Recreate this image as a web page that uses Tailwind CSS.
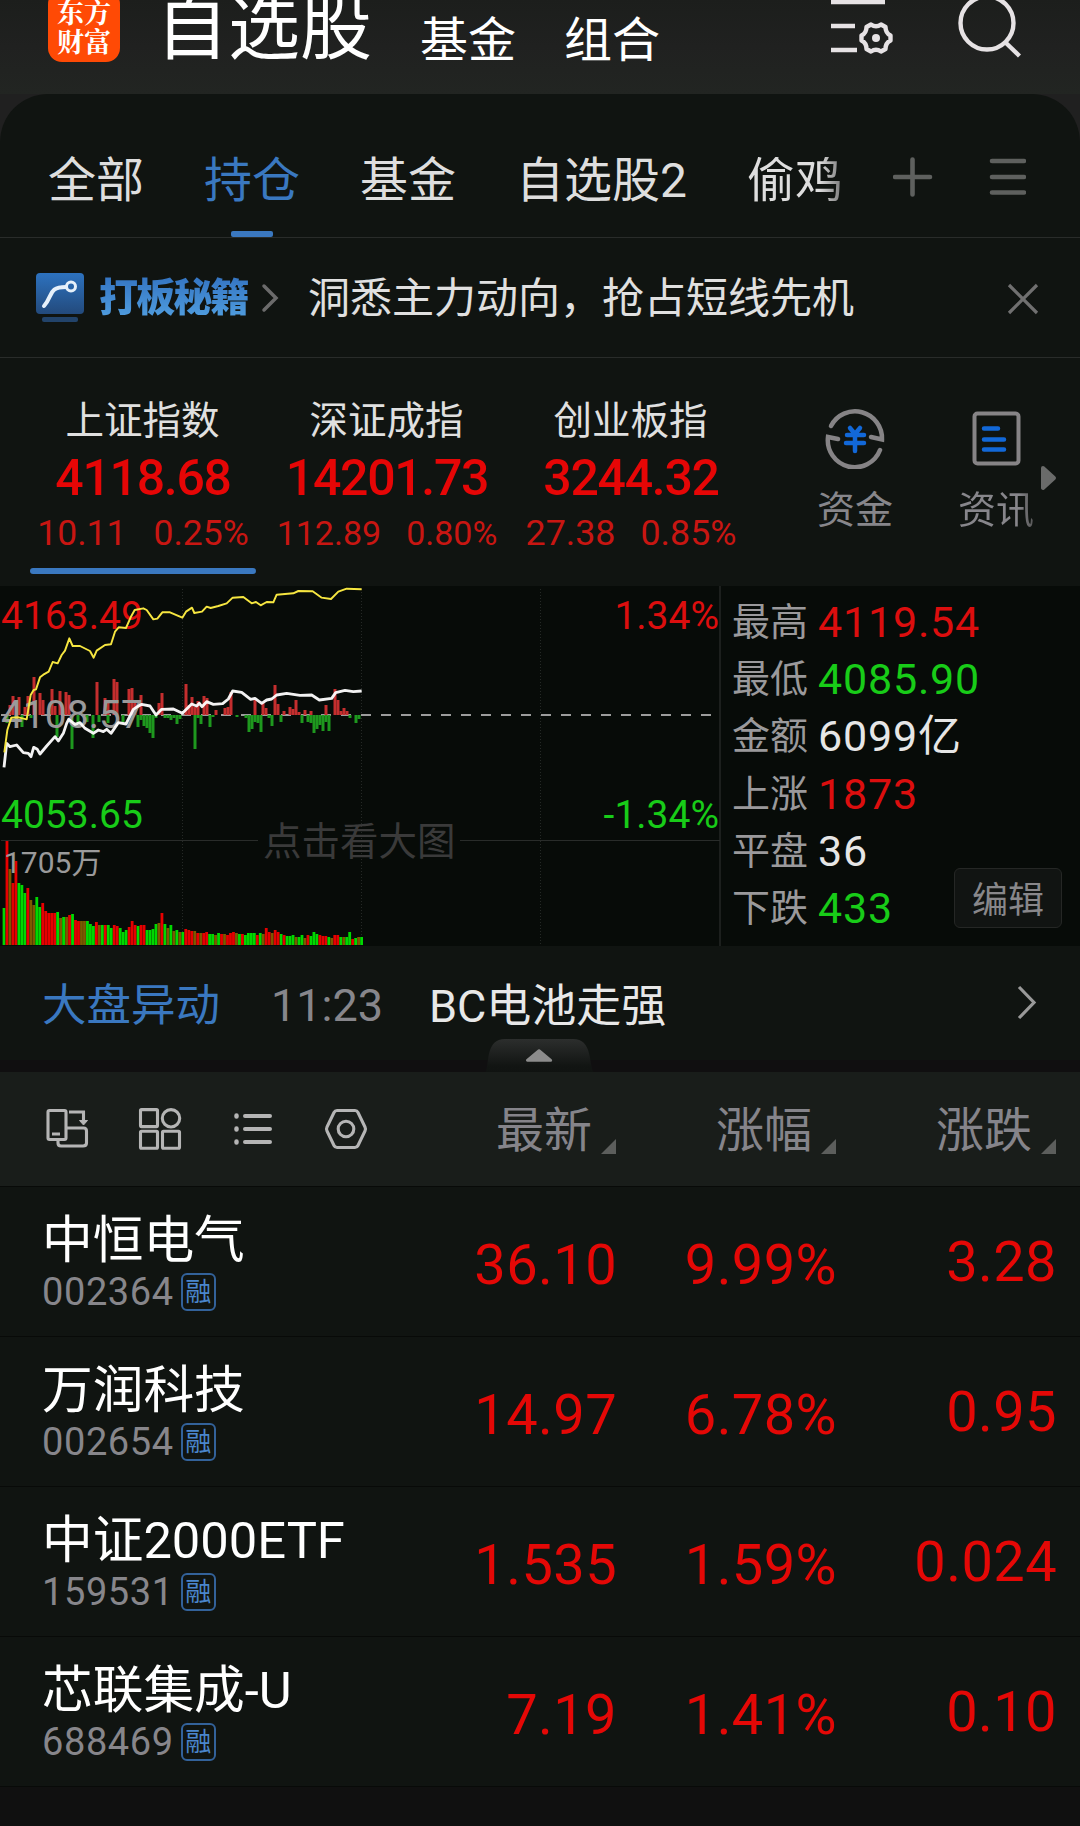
<!DOCTYPE html>
<html lang="zh-CN">
<head>
    <meta charset="UTF-8">
    <meta name="viewport" content="width=device-width, initial-scale=1.0">
    <title>自选股</title>
    <script src="https://cdn.jsdelivr.net/npm/@tailwindcss/browser@4"></script>
</head>
<body class="bg-[#101010] font-['Roboto','Noto_Sans_CJK_SC',sans-serif] text-[#e0e0e0]">
    <div class="w-[1080px] h-[1826px] overflow-hidden">

        <!-- header -->
        <div class="bg-[#202020]">
            <header class="h-[94px] flex items-start overflow-hidden bg-linear-to-b from-[#1c1e1c] via-[#202120] to-[#222522] pl-12 text-white">
                <div class="-mt-[10px] w-[72px] h-[72px] shrink-0 rounded-[14px] bg-[#ff4a05] flex flex-col items-center justify-center font-['Noto_Serif_CJK_SC','Noto_Sans_CJK_SC',serif] font-bold text-[27px] leading-[29px]">
                    <span>东方</span>
                    <span>财富</span>
                </div>
                <h1 class="-mt-[7px] ml-9 text-[72px] leading-none">自选股</h1>
                <span class="mt-[17px] ml-12 text-5xl leading-none">基金</span>
                <span class="mt-[17px] ml-12 text-5xl leading-none">组合</span>
                <svg class="ml-[171px] w-[64px] h-[60px] shrink-0" viewBox="0 0 64 60" fill="none" stroke="#e6e2e4" stroke-width="4.6">
                    <path d="M0 2H54M0 26H24M0 50H26"/>
                    <path stroke-width="4.4" stroke-linejoin="round" d="M40 24.5Q45 28 50 24.5L54.5 27Q54.500 33 59.500 35.500V40.500Q54.500 43 54.500 49L50 51.500Q45 48 40 51.500L35.500 49Q35.500 43 30.500 40.500V35.500Q35.500 33 35.500 27Z"/>
                    <circle cx="45" cy="38" r="4" fill="#e6e2e4" stroke="none"/>
                </svg>
                <svg class="ml-[63px] w-[66px] h-[60px] shrink-0" viewBox="0 0 66 60" fill="none" stroke="#e6e2e4" stroke-width="4.400">
                    <circle cx="29" cy="23" r="26.500"/>
                    <path d="M47 42L61.500 56"/>
                </svg>
            </header>

            <!-- group tabs -->
            <nav class="relative h-[144px] flex items-start gap-[60px] bg-[#101411] rounded-t-[48px] border-b border-[#292c2a] pl-12 pt-[63px] text-5xl leading-none text-[#dedede]">
                <span>全部</span>
                <span class="relative text-[#3a78c0]">持仓<i class="absolute left-[27px] top-[74px] w-[42px] h-[6px] rounded-[2px] bg-[#3a78c0]"></i></span>
                <span>基金</span>
                <span>自选股2</span>
                <span class="bg-linear-to-r from-[#dedede] from-75% to-[#777] bg-clip-text text-transparent">偷鸡</span>
                <svg class="-ml-[10px] w-[133px] h-[40px]" viewBox="0 0 133 40" stroke="#5e605e" stroke-width="4.600" stroke-linecap="round">
                    <path d="M2 20H37M19.500 2.500V37.500M99 4H131M99 20H131M99 35.500H131"/>
                </svg>
            </nav>
        </div>

        <!-- promo banner -->
        <div class="h-[120px] flex items-center bg-[#101411] border-b border-[#292c2a] pl-9">
            <svg class="w-12 h-[50px]" viewBox="0 0 48 50">
                <defs><linearGradient id="promo" x1="0" y1="0" x2="0" y2="1"><stop offset="0" stop-color="#2d72bf"/><stop offset="1" stop-color="#234a7c"/></linearGradient></defs>
                <rect width="48" height="41" rx="4" fill="url(#promo)"/>
                <rect x="6" y="44" width="36" height="5" rx="2" fill="#22436a"/>
                <path d="M8 33C17 23 12 14 30 14" fill="none" stroke="#e6f0fa" stroke-width="4" stroke-linecap="round"/>
                <circle cx="35" cy="13.500" r="4.500" fill="none" stroke="#e6f0fa" stroke-width="3"/>
            </svg>
            <b class="ml-[15px] w-[150px] text-[39px] leading-[44px] font-black tracking-[-1.800px] bg-linear-to-b from-[#3474c2] to-[#519fe0] bg-clip-text text-transparent">打板秘籍</b>
            <svg class="ml-[12px] w-[18px] h-[30px]" viewBox="0 0 18 30" fill="none" stroke="#6b6b6b" stroke-width="3.500" stroke-linecap="round"><path d="M3 3L15 15L3 27"/></svg>
            <span class="ml-[29px] mt-[2px] text-[42px] leading-none">洞悉主力动向，抢占短线先机</span>
            <svg class="ml-[153px] mt-[2px] w-[32px] h-[32px]" viewBox="0 0 32 32" stroke="#707070" stroke-width="3.200"><path d="M2 2L30 30M30 2L2 30"/></svg>
        </div>

        <!-- market indices -->
        <div class="h-[228px] flex items-start bg-[#101411] pl-[21px] pt-[34px]">
            <div class="w-[244px] flex flex-col items-center">
                <span class="-ml-px text-[38.500px] leading-[58px]">上证指数</span>
                <span class="text-[50px] leading-[56px] font-medium tracking-[-1.300px] text-[#e60606]">4118.68</span>
                <span class="flex gap-[27px] text-[35.500px] leading-[54px] text-[#c81612]"><i class="not-italic">10.11</i><i class="not-italic">0.25%</i></span>
                <div class="mt-2 w-[226px] h-[6px] rounded-full bg-[#3a78c0]"></div>
            </div>
            <div class="w-[244px] flex flex-col items-center">
                <span class="-ml-px text-[38.500px] leading-[58px]">深证成指</span>
                <span class="text-[50px] leading-[56px] font-medium tracking-[-1.300px] text-[#e60606]">14201.73</span>
                <span class="flex gap-[25px] text-[34px] leading-[54px] text-[#c81612]"><i class="not-italic">112.89</i><i class="not-italic">0.80%</i></span>
            </div>
            <div class="w-[244px] flex flex-col items-center">
                <span class="-ml-px text-[38.500px] leading-[58px]">创业板指</span>
                <span class="text-[50px] leading-[56px] font-medium tracking-[-1.300px] text-[#e60606]">3244.32</span>
                <span class="flex gap-[25px] text-[35.800px] leading-[54px] text-[#c81612]"><i class="not-italic">27.38</i><i class="not-italic">0.85%</i></span>
            </div>
            <div class="ml-[64px] w-[76px] pt-[15px] flex flex-col items-center text-[38px] text-[#87868b]">
                <svg class="w-[62px] h-[62px]" viewBox="0 0 62 62" fill="none" stroke="#868486" stroke-width="4.500">
                    <path stroke-linecap="round" d="M7 19A27 27 0 0 1 58 32.500L47 30"/>
                    <path stroke-linecap="round" d="M56 43A27 27 0 0 1 4 30L14 32"/>
                    <path stroke="#1268d8" stroke-linecap="round" d="M26 21L31 27L36 21M23 28H40M22 36H40M31 28V44"/>
                </svg>
                <span class="mt-[19px] leading-[44px]">资金</span>
            </div>
            <div class="ml-[65px] w-[76px] pt-[15px] flex flex-col items-center text-[38px] text-[#87868b]">
                <svg class="w-[62px] h-[62px]" viewBox="0 0 62 62" fill="none" stroke="#868486" stroke-width="4">
                    <rect x="9.500" y="6.500" width="44" height="50" rx="3"/>
                    <path stroke="#1268d8" stroke-linecap="round" d="M19 21.500H33M19 32.500H39M19 42.500H39" stroke-width="4.500"/>
                </svg>
                <span class="mt-[19px] leading-[44px] bg-linear-to-r from-[#87868b] from-80% to-[#555] bg-clip-text text-transparent">资讯</span>
            </div>
            <svg class="ml-[7px] mt-[73px] w-[16px] h-[26px]" viewBox="0 0 16 26"><path d="M2 3L13 13L2 23Z" fill="#6a6b6a" stroke="#6a6b6a" stroke-width="4" stroke-linejoin="round"/></svg>
        </div>

        <!-- intraday chart + stats -->
        <div class="h-[360px] flex bg-[#070b08]">
            <div class="relative w-[721px] shrink-0 border-r-2 border-[#1c1f1d] text-[39px] leading-none">
                <svg class="absolute inset-0 w-[720px] h-[360px]" viewBox="0 0 720 360" fill="none">
                    <path d="M182.500 3V360M361.500 3V360M540.500 3V360" stroke="#252926" stroke-dasharray="1 2"/>
                    <path d="M1 254.500H258M460 254.500H720" stroke="#292c2a"/>
                    <path d="M1 129H712" stroke="#9c9c9c" stroke-width="2" stroke-dasharray="10 10"/>
                    <g id="flow"></g>
                    <g id="volume"></g>
                </svg>
                <span class="absolute left-[1px] top-[11px] text-[#dc0e0e]">4163.49</span>
                <span class="absolute left-[1px] top-[110px] text-[#9a9a9a]">4108.57</span>
                <span class="absolute left-[1px] top-[210px] text-[#18cc18]">4053.65</span>
                <span class="absolute right-0 top-[11px] text-[#dc0e0e]">1.34%</span>
                <span class="absolute right-0 top-[210px] text-[#18cc18]">-1.34%</span>
                <span class="absolute left-[4px] top-[262px] text-[30px] text-[#9a9a9a]">1705万</span>
                <span class="absolute left-[263px] top-[237px] text-[38.500px] text-[#3a3a3a]">点击看大图</span>
                <svg class="absolute inset-0 w-[720px] h-[360px]" viewBox="0 54 2160 1080" fill="none" stroke-linejoin="round">
                    <g transform="translate(0 36)">
                        <path stroke="#ffffff" stroke-opacity=".95" stroke-width="8.500" d="M12 562L20 490L30 500L50 495L70 518L85 520L93 530L101 502L112 508L120 522L140 498L165 470L175 483L190 460L200 430L206 418L225 433L240 428L255 445L280 460L295 450L310 455L320 448L333 460L355 428L378 432L400 388L412 380L425 373L450 378L468 405L485 388L520 387L547 400L575 372L590 378L598 370L606 380L620 365L640 373L668 371L685 357L698 333L725 337L752 358L765 355L785 370L800 360L815 357L830 345L860 340L900 346L935 345L958 360L995 355L1007 338L1035 331L1060 335L1085 333"/>
                        <path stroke="#f6e640" stroke-width="5.800" d="M13 517L22 450L34 413L55 412L80 418L92 345L101 330L108 328L120 292L130 284L146 275L158 246L173 250L185 225L195 212L208 175L218 198L240 198L270 213L281 233L290 212L315 195L333 193L345 155L356 142L378 144L392 112L404 90L430 85L440 90L460 118L472 116L487 97L510 97L547 113L558 95L576 83L583 99L606 95L620 80L632 84L655 78L680 70L698 53L730 51L755 70L768 66L782 76L800 66L820 67L830 44L880 40L895 33L938 34L965 53L993 57L1015 35L1040 26L1085 28"/>
                    </g>
                </svg>
            </div>
            <div class="relative flex-1 pl-[11px] pt-[8px] text-[38px] leading-[57.200px] text-[#9a999b]">
                <div class="flex gap-[10px]"><span>最高</span><b class="font-normal text-[43px] tracking-[0.800px] text-[#dc0e0e]">4119.54</b></div>
                <div class="flex gap-[10px]"><span>最低</span><b class="font-normal text-[43px] tracking-[0.800px] text-[#18cc18]">4085.90</b></div>
                <div class="flex gap-[10px]"><span>金额</span><b class="font-normal text-[43px] tracking-[0.800px] text-[#e6e6e6]">6099亿</b></div>
                <div class="flex gap-[10px]"><span>上涨</span><b class="font-normal text-[43px] tracking-[0.800px] text-[#dc0e0e]">1873</b></div>
                <div class="flex gap-[10px]"><span>平盘</span><b class="font-normal text-[43px] tracking-[0.800px] text-[#e6e6e6]">36</b></div>
                <div class="flex gap-[10px]"><span>下跌</span><b class="font-normal text-[43px] tracking-[0.800px] text-[#18cc18]">433</b></div>
                <button class="absolute right-[18px] top-[282px] w-[108px] h-[60px] rounded-[6px] border border-[#252725] bg-[#111412] pt-[5px] text-[36px] leading-none text-[#88878a]">编辑</button>
            </div>
        </div>

        <!-- market news -->
        <div class="relative h-[114px] flex items-start bg-[#101411] pl-[42px] pt-[38px] text-[44.500px] leading-none">
            <span class="text-[#3a78c0]">大盘异动</span>
            <span class="-mt-px ml-[51px] text-[45px] text-[#87868b]">11:23</span>
            <span class="absolute left-[429px] text-[45px] text-[#e8e8e8]">BC电池走强</span>
            <svg class="absolute left-[1015px] top-[39px] w-[24px] h-[36px]" viewBox="0 0 24 36" fill="none" stroke="#999" stroke-width="3.200"><path d="M4 2L19 17.500L4 33"/></svg>
            <svg class="absolute left-[484px] top-[93px] w-[112px] h-[33px]" viewBox="0 0 112 34">
                <defs><linearGradient id="handle" x1="0" y1="0" x2="0" y2="1"><stop offset="0" stop-color="#2c2e2d"/><stop offset=".8" stop-color="#121513"/><stop offset="1" stop-color="#101311"/></linearGradient></defs>
                <path d="M0 34C4 24 0 0 20 0H90C110 0 106 24 111 34Z" fill="url(#handle)"/>
                <path d="M43 22L55 12L67 22Z" fill="#8c8c8c" stroke="#8c8c8c" stroke-width="3" stroke-linejoin="round"/>
            </svg>
        </div>
        <div class="h-3 bg-[#100f10]"></div>

        <!-- table head -->
        <div class="h-[115px] flex items-center bg-[#191d1a] border-b border-[#080a08] pl-[46px] text-5xl leading-none text-[#85848a]">
            <svg class="w-[322px] h-[42px] shrink-0" viewBox="0 0 322 42" fill="none" stroke="#b5b5b5" stroke-width="3.100">
                <rect x="2" y="2.500" width="18" height="29" rx="1.500"/>
                <path d="M6 26H14M23 4H37.500V14M12 32V35Q12 38 15 38H37Q40.500 38 40.500 35V23Q40.500 20 37.500 20H21"/>
                <path d="M33.500 12.500H41.500L37.500 17Z" fill="#b5b5b5" stroke-width="1"/>
                <rect x="94.500" y="1.600" width="17" height="17" rx="1"/>
                <circle cx="125" cy="10.300" r="8.700"/>
                <rect x="94.500" y="23.200" width="17" height="17" rx="1"/>
                <rect x="116.500" y="23.200" width="17" height="17" rx="1"/>
                <path d="M199 8H224M199 21H224M199 34H224" stroke-width="4" stroke-linecap="round"/>
                <path d="M190.500 7.500V8.500M190.500 20.500V21.500M190.500 33.500V34.500" stroke-width="4.500" stroke-linecap="round"/>
                <path d="M291 2.500H309Q311 2.500 312 4.500L319 19Q320 21 319 23L312 37.500Q311 39.500 309 39.500H291Q289 39.500 288 37.500L281 23Q280 21 281 19L288 4.500Q289 2.500 291 2.500Z"/>
                <circle cx="300" cy="21" r="7.800"/>
            </svg>
            <span class="ml-[128px] mt-[3px]">最新</span>
            <svg class="ml-[9px] mt-[34px] w-[15px] h-[15px]" viewBox="0 0 15 15"><path d="M15 0V15H0Z" fill="#5c5e5c"/></svg>
            <span class="ml-[100px] mt-[3px]">涨幅</span>
            <svg class="ml-[9px] mt-[34px] w-[15px] h-[15px]" viewBox="0 0 15 15"><path d="M15 0V15H0Z" fill="#5c5e5c"/></svg>
            <span class="ml-[100px] mt-[3px]">涨跌</span>
            <svg class="ml-[9px] mt-[34px] w-[15px] h-[15px]" viewBox="0 0 15 15"><path d="M15 0V15H0Z" fill="#5c5e5c"/></svg>
        </div>

        <!-- holdings -->
        <div id="stocks"></div>
    </div>

    <script>
        const stocks = [
            ['中恒电气', '002364', '36.10', '9.99%', '3.28'],
            ['万润科技', '002654', '14.97', '6.78%', '0.95'],
            ['中证2000ETF', '159531', '1.535', '1.59%', '0.024'],
            ['芯联集成-U', '688469', '7.19', '1.41%', '0.10']
        ];

        document.getElementById('stocks').innerHTML = stocks.map(([name, code, price, pct, diff]) => `
            <div class="h-[150px] grid grid-cols-[401px_216px_220px_220px] bg-[#101411] border-b border-[#080a08] text-right text-[56px] leading-none tracking-[0.400px] text-[#e40806]">
                <div class="pl-[42px] pt-[29px] text-left tracking-normal">
                    <div class="text-[50.700px] leading-[50px] text-white whitespace-nowrap">${name}</div>
                    <div class="mt-[7px] flex items-center gap-[7px] text-[38px] leading-[38px] tracking-[0.600px] text-[#87868b]">
                        ${code}
                        <span class="w-[35px] h-[38px] rounded-[6px] border-2 border-[#33629a] flex items-center justify-center text-[26px] leading-none tracking-normal text-[#4a86cc]">融</span>
                    </div>
                </div>
                <span class="pt-[50px]">${price}</span>
                <span class="pt-[50px]">${pct}</span>
                <span class="pt-[47px]">${diff}</span>
            </div>`).join('');

        // volume bars: height + colour (r = up, g = down, m = mixed)
        const volume = '37g 104r 76m 62r 84r 62g 60g 52g 57r 45m 40m 48g 38g 42r 34r 32r 32r 32r 33g 27m 28g 28m 30r 31g 25r 24r 24m 24m 24g 21g 19g 23r 20m 20g 20r 20g 17g 20r 19r 17g 13g 15g 18r 24r 20r 19g 20r 20r 15g 15g 16g 21g 22m 32r 21g 17m 20g 14m 15g 13m 13g 16r 15r 14r 14m 12r 12m 12r 13r 11g 11g 10m 12g 11r 11m 10r 12r 13r 12m 11g 11r 10g 12g 12g 12g 10r 12g 11m 17r 13r 12m 15r 13r 11g 10r 9g 9g 10g 8m 8g 10g 7m 10r 9g 13g 11g 10r 9r 9r 8g 7m 10r 10r 8g 8m 8g 13g 6r 7g 8m 8g'.split(' ');
        const fills = { r: '#e60000', g: '#00d800', m: '#7c5a00' };
        document.getElementById('volume').innerHTML = volume.map((v, i) => {
            const h = parseInt(v);
            return `<rect x="${(2.6 + i * 2.98).toFixed(2)}" y="${359 - h}" width="2.8" height="${h}" fill="${fills[v.slice(-1)]}"/>`;
        }).join('');

        // capital flow bars around the zero line, [x, height], negative goes down
        const flow = [[10,10],[13,19],[19,18],[25,8],[28,19],[34,38],[40,22],[43,15],[52,26],[55,9],[60,24],[66,23],[69,20],[97,33],[105,17],[108,12],[114,36],[117,33],[129,26],[132,27],[135,13],[141,20],[159,12],[162,22],[186,31],[189,10],[192,18],[195,8],[198,14],[204,19],[207,17],[216,5],[225,7],[228,8],[231,23],[255,15],[263,12],[266,7],[275,30],[278,11],[284,4],[290,8],[293,6],[296,15],[299,3],[305,5],[311,4],[326,10],[335,26],[338,15],[341,4],[344,7],[347,4],
            [7,-8],[16,-5],[22,-12],[31,-3],[57,-22],[72,-34],[78,-8],[87,-7],[93,-23],[99,-7],[108,-8],[123,-7],[138,-12],[141,-5],[144,-11],[147,-13],[150,-18],[153,-23],[156,-3],[165,-3],[168,-3],[171,-5],[174,-3],[177,-9],[180,-4],[195,-34],[198,-3],[201,-9],[210,-12],[213,-2],[237,-2],[246,-3],[249,-17],[252,-14],[255,-7],[258,-8],[261,-17],[269,-3],[272,-11],[281,-7],[302,-8],[308,-7],[311,-8],[314,-18],[317,-14],[320,-10],[323,-16],[326,-7],[329,-16],[350,-3],[356,-8],[359,-4]];
        document.getElementById('flow').innerHTML = flow.map(([x, h]) =>
            `<rect x="${x - 1.5}" y="${h > 0 ? 129 - h : 129}" width="3" height="${Math.abs(h)}" fill="${h > 0 ? '#c42e2e' : '#1e981e'}"/>`
        ).join('');
    </script>
</body>
</html>
